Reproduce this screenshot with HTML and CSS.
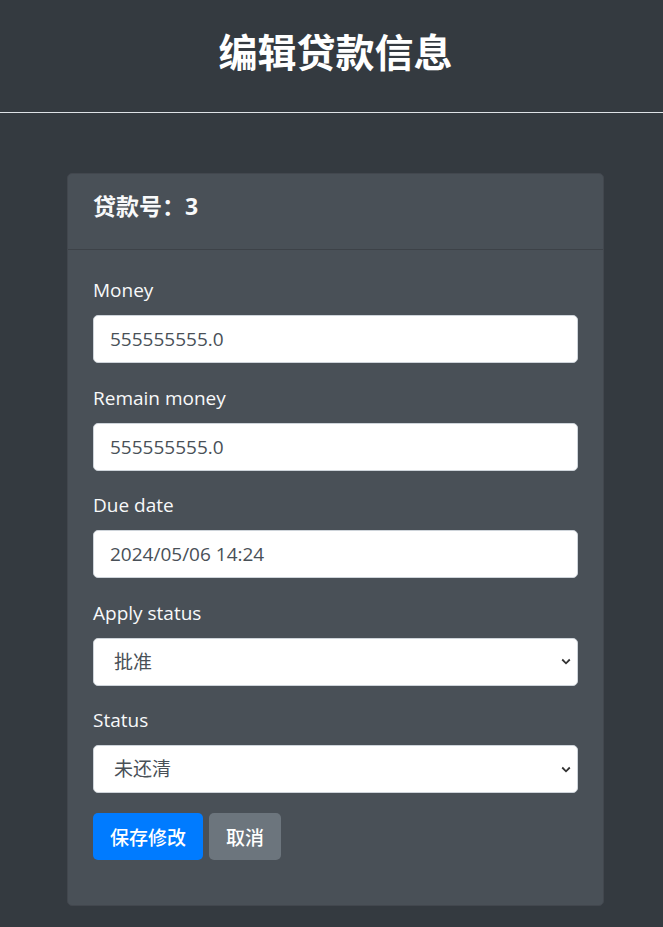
FILE: index.html
```html
<!DOCTYPE html>
<html lang="zh">
<head>
<meta charset="utf-8">
<title>编辑贷款信息</title>
<link rel="stylesheet" href="styles.css">
</head>
<body>
<header class="page-header">
  <h1 class="page-title">编辑贷款信息</h1>
</header>
<main class="container">
  <section class="card">
    <div class="card-header">
      <h4 class="card-title">贷款号：3</h4>
    </div>
    <form class="card-body">
      <div class="form-group">
        <label class="form-label">Money</label>
        <input class="form-control" type="text" value="555555555.0">
      </div>
      <div class="form-group">
        <label class="form-label">Remain money</label>
        <input class="form-control" type="text" value="555555555.0">
      </div>
      <div class="form-group">
        <label class="form-label">Due date</label>
        <input class="form-control" type="text" value="2024/05/06 14:24">
      </div>
      <div class="form-group">
        <label class="form-label">Apply status</label>
        <select class="form-control form-select">
          <option>批准</option>
        </select>
      </div>
      <div class="form-group">
        <label class="form-label">Status</label>
        <select class="form-control form-select">
          <option>未还清</option>
        </select>
      </div>
      <div class="actions">
        <button type="button" class="btn btn-primary">保存修改</button>
        <button type="button" class="btn btn-secondary">取消</button>
      </div>
    </form>
  </section>
</main>
</body>
</html>
```
FILE: styles.css
```css
* { box-sizing: border-box; }
html, body { margin: 0; padding: 0; }
body {
  background: #343a40;
  color: #f8f9fa;
  font-family: "Open Sans", "Noto Sans CJK SC", sans-serif;
  font-size: 19px;
  line-height: 1.5;
  min-height: 927px;
}
.page-header {
  height: 113px;
  border-bottom: 1px solid #dee2e6;
  display: flex;
  justify-content: center;
  padding: 22px 0 0 8px;
}
.page-title {
  margin: 0;
  font-size: 39px;
  line-height: 56px;
  font-weight: 700;
  color: #ffffff;
  font-family: "Noto Sans CJK SC", sans-serif;
}
.container {
  padding: 60px 59px 20px 67px;
}
.card {
  background: #495057;
  border: 1px solid #42474e;
  border-radius: 5px;
}
.card-header {
  padding: 17px 25px 20px;
  border-bottom: 1px solid #3d4248;
}
.card-title {
  margin: 0 0 8px;
  font-size: 23px;
  line-height: 30px;
  font-weight: 700;
  color: #f8f9fa;
  font-family: "Open Sans", "Noto Sans CJK SC", sans-serif;
}
.card-body {
  display: flex;
  flex-direction: column;
  padding: 25px 25px 45px;
}
.form-group {
  display: flex;
  flex-direction: column;
  margin-bottom: 19.5px;
}
.form-label {
  font-size: 19px;
  line-height: 30px;
  margin-bottom: 10px;
  color: #f8f9fa;
}
.form-control {
  height: 48px;
  width: 100%;
  padding: 0 16px;
  font-family: "Open Sans", "Noto Sans CJK SC", sans-serif;
  font-size: 19px;
  color: #495057;
  background: #ffffff;
  border: 1px solid #ced4da;
  border-radius: 5px;
  outline: none;
}
.form-select {
  appearance: none;
  -webkit-appearance: none;
  padding-left: 20px;
  background-image: url("data:image/svg+xml,%3Csvg xmlns='http://www.w3.org/2000/svg' width='10' height='7' viewBox='0 0 10 7'%3E%3Cpath d='M1.2 1.5l3.8 3.8 3.8-3.8' fill='none' stroke='%23333' stroke-width='1.8'/%3E%3C/svg%3E");
  background-repeat: no-repeat;
  background-position: right 6px center;
  background-size: 10px 7px;
}
.actions {
  display: flex;
  gap: 6px;
  margin-top: 0;
}
.btn {
  height: 47px;
  padding: 0 17px;
  border: none;
  border-radius: 5px;
  font-family: "Noto Sans CJK SC", sans-serif;
  font-size: 19px;
  font-weight: 500;
  color: #ffffff;
  cursor: pointer;
}
.btn-primary { background: #007bff; }
.btn-secondary { background: #6c757d; }
```
